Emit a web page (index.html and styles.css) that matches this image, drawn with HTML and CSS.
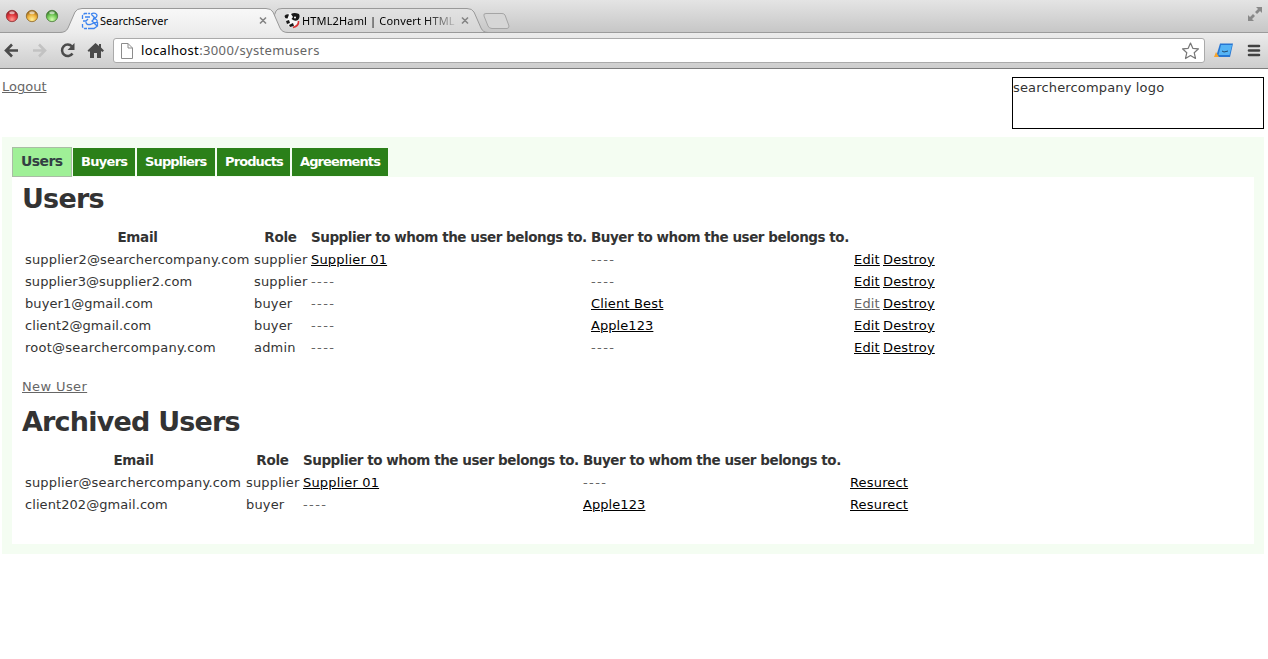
FILE: index.html
```html
<!DOCTYPE html>
<html lang="en">
<head>
<meta charset="utf-8">
<title>SearchServer</title>
<link rel="stylesheet" href="styles.css">
</head>
<body>
<header class="browser">
  <svg class="tabshapes" width="1268" height="34" viewBox="0 0 1268 34">
    <defs>
      <linearGradient id="act" x1="0" y1="0" x2="0" y2="1"><stop offset="0" stop-color="#f8f8f8"/><stop offset="1" stop-color="#ececec"/></linearGradient>
      <linearGradient id="ina" x1="0" y1="0" x2="0" y2="1"><stop offset="0" stop-color="#e2e2e2"/><stop offset="1" stop-color="#d6d6d6"/></linearGradient>
      <radialGradient id="red" cx=".5" cy=".8" r=".7"><stop offset="0" stop-color="#ff9b93"/><stop offset=".6" stop-color="#e2363c"/><stop offset="1" stop-color="#9c2228"/></radialGradient>
      <radialGradient id="yel" cx=".5" cy=".8" r=".7"><stop offset="0" stop-color="#fff09a"/><stop offset=".6" stop-color="#eeb03a"/><stop offset="1" stop-color="#9b6a1d"/></radialGradient>
      <radialGradient id="grn" cx=".5" cy=".8" r=".7"><stop offset="0" stop-color="#d5ffb0"/><stop offset=".6" stop-color="#71c955"/><stop offset="1" stop-color="#3c7c2c"/></radialGradient>
    </defs>
    <path d="M0 32.5H1268" stroke="#9b9b9b"/>
    <path d="M268 32.5Q276 32.5 278 26Q272 18 276 11Q277 8.500 282 8.500H467Q472 8.500 474 12L481 28Q483 32.500 488 32.500Z" fill="url(#ina)" stroke="#999"/>
    <path d="M60 34V32.500Q66 32.500 68 28L75 12Q77 8.500 82 8.500H266Q271 8.500 273 12L280 28Q282 32.500 288 32.500V34Z" fill="url(#act)"/>
    <path d="M60 32.500Q66 32.500 68 28L75 12Q77 8.500 82 8.500H266Q271 8.500 273 12L280 28Q282 32.500 288 32.500" fill="none" stroke="#999"/>
    <path d="M486 13.500H502Q504 13.500 505 15L509 26Q509 28.500 507 28.500H492Q489 28.500 488 26L484 16Q483 13.500 486 13.500Z" fill="#d6d6d6" stroke="#a5a5a5"/>
    <g stroke-width=".8"><circle cx="12" cy="16" r="5.700" fill="url(#red)" stroke="#8d3034"/><circle cx="32" cy="16" r="5.700" fill="url(#yel)" stroke="#8e6728"/><circle cx="52" cy="16" r="5.700" fill="url(#grn)" stroke="#4b7b3c"/></g>
    <g fill="#fff" opacity=".6"><ellipse cx="12" cy="12.800" rx="2.800" ry="1.500"/><ellipse cx="32" cy="12.800" rx="2.800" ry="1.500"/><ellipse cx="52" cy="12.800" rx="2.800" ry="1.500"/></g>
    <path d="M260 17.500L266 23.500M266 17.500L260 23.500M462 17.500L468 23.500M468 17.500L462 23.500" stroke="#858585" stroke-width="1.600"/>
    <g fill="#898989"><path d="M1256 7H1262V13L1260 11L1257 14L1255 12L1258 9Z"/><path d="M1248 15V21H1254L1252 19L1255 16L1253 14L1250 17Z"/></g>
    <g fill="none" stroke="#3d84ef" stroke-width="1.300"><path d="M82.500 19V15.500L84.500 13.500H90M82.500 24V27L84.500 28.500H87" stroke-dasharray="4 1"/><path d="M83 21H86L88 19M91 14Q95 12 97 15Q97 18 93 18.500Q98 19 97 22Q94 24 92 21M91 14L95 18L92 21L97 26M86 22Q86 25 90 24.500L94 23M88 28.500H94L97.500 26V22M85 17H90"/></g>
    <path d="M287 14Q294 11 299 15L298 22Q295 28 289 27L286 20Z" fill="#f7f7f7"/>
    <g fill="#171717"><path d="M284.500 16Q286 13.500 289 14.500L287.500 18.500Q285 19 284.500 16ZM291 14Q294 12 299 14Q300.500 17 298 20Q295 22 291.500 19L293 17ZM286 21L289 20L290 23L287 24ZM289 25L293 23L294 26L290 27Z"/><circle cx="295" cy="17.500" r="1" fill="#fff"/><path d="M298.500 21Q299 26 293 27.500" fill="none" stroke="#dc3434" stroke-width="1.600"/></g>
  </svg>
  <div class="tabs"><span class="tab one">SearchServer</span><span class="tab two">HTML2Haml | Convert HTML</span></div>
  <div class="toolbar">
    <svg width="108" height="30" viewBox="0 38 108 30">
      <path d="M18 50.500H7M12 44.500L6 50.500L12 56.500" fill="none" stroke="#4b4b4b" stroke-width="2.600"/>
      <path d="M33 50.500H44M39 44.500L45 50.500L39 56.500" fill="none" stroke="#c2c2c2" stroke-width="2.600"/>
      <path d="M72 46.500A5.700 5.700 0 1 0 72.500 53.500" fill="none" stroke="#4b4b4b" stroke-width="2.500"/><path d="M74.500 43V50H67.500Z" fill="#4b4b4b"/>
      <path d="M95.500 43L87.500 50.500L89 52L90 51V58H94V53H97V58H101V51L102.500 52L104 50.500L101 47.500V44H99V46Z" fill="#4b4b4b"/>
    </svg>
    <div class="address">
      <svg class="doc" width="14" height="16" viewBox="0 0 14 16"><path d="M1.500 .5H8L12.500 5V15.500H1.500ZM8 .5V5H12.500" fill="#fff" stroke="#8c8c8c"/></svg>
      <span class="url">localhost<span class="path">:3000/systemusers</span></span>
      <svg class="star" width="20" height="20" viewBox="0 0 20 20"><path d="M10.500 2L12.800 7.300L18.500 7.800L14.200 11.700L15.500 17.500L10.500 14.500L5.500 17.500L6.800 11.700L2.500 7.800L8.200 7.300Z" fill="#fff" stroke="#777" stroke-width="1.200" stroke-linejoin="round"/></svg>
    </div>
    <svg class="tools" width="60" height="30" viewBox="1208 38 60 30">
      <path d="M1220 43.500H1233L1230 57H1216Z" fill="#2776d2"/><path d="M1221 45H1232L1229.500 55H1218.500Z" fill="#55b4f5"/><path d="M1222 51L1224 52L1228 51" fill="none" stroke="#21496e"/><path d="M1214 57L1216 52L1219 57Z" fill="#f7a42c"/>
      <path d="M1249 46H1259M1249 50.500H1259M1249 55H1259" stroke="#414141" stroke-width="2.600" stroke-linecap="round"/>
    </svg>
  </div>
</header>
<main class="page">
  <div class="top"><a class="muted logout" href="#">Logout</a><div class="logo">searchercompany logo</div></div>
  <div class="shell">
    <nav class="menu"><a class="current" href="#">Users</a><a class="m2" href="#">Buyers</a><a class="m3" href="#">Suppliers</a><a class="m4" href="#">Products</a><a class="m5" href="#">Agreements</a></nav>
    <section class="panel">
      <h1>Users</h1>
      <table class="users">
        <colgroup><col class="email"><col class="role"><col class="supplier"><col class="buyer"><col class="edit"><col class="destroy"></colgroup>
        <tr><th>Email</th><th>Role</th><th class="long">Supplier to whom the user belongs to.</th><th class="long">Buyer to whom the user belongs to.</th><th></th><th></th></tr>
        <tr><td>supplier2@searchercompany.com</td><td>supplier</td><td><a href="#">Supplier 01</a></td><td><i>----</i></td><td><a href="#">Edit</a></td><td><a href="#">Destroy</a></td></tr>
        <tr><td class="tight">supplier3@supplier2.com</td><td>supplier</td><td><i>----</i></td><td><i>----</i></td><td><a href="#">Edit</a></td><td><a href="#">Destroy</a></td></tr>
        <tr><td class="tight">buyer1@gmail.com</td><td>buyer</td><td><i>----</i></td><td><a href="#">Client Best</a></td><td><a class="muted" href="#">Edit</a></td><td><a href="#">Destroy</a></td></tr>
        <tr><td class="tight">client2@gmail.com</td><td>buyer</td><td><i>----</i></td><td class="tight"><a href="#">Apple123</a></td><td><a href="#">Edit</a></td><td><a href="#">Destroy</a></td></tr>
        <tr><td class="loose">root@searchercompany.com</td><td>admin</td><td><i>----</i></td><td><i>----</i></td><td><a href="#">Edit</a></td><td><a href="#">Destroy</a></td></tr>
      </table>
      <p class="new"><a class="muted" href="#">New User</a></p>
      <h1>Archived Users</h1>
      <table class="archived">
        <colgroup><col class="email"><col class="role"><col class="supplier"><col class="buyer"><col class="resurect"></colgroup>
        <tr><th>Email</th><th>Role</th><th class="long">Supplier to whom the user belongs to.</th><th class="long">Buyer to whom the user belongs to.</th><th></th></tr>
        <tr><td>supplier@searchercompany.com</td><td>supplier</td><td><a href="#">Supplier 01</a></td><td><i>----</i></td><td><a href="#">Resurect</a></td></tr>
        <tr><td class="tight">client202@gmail.com</td><td>buyer</td><td><i>----</i></td><td class="tight"><a href="#">Apple123</a></td><td><a href="#">Resurect</a></td></tr>
      </table>
    </section>
  </div>
</main>
</body>
</html>
```
FILE: styles.css
```css
* { box-sizing: border-box; }
body { margin: 0; background: #fff; color: #333; font: 13px/18px "DejaVu Sans", Verdana, sans-serif; overflow: hidden; }
a { color: #000; text-underline-offset: 1px; text-decoration-thickness: 1px; }
.muted { color: #666; }
.browser { position: relative; height: 69px; font-family: "Noto Sans", sans-serif; color: #000; }
.tabshapes { position: absolute; left: 0; top: 0; background: linear-gradient(#e4e4e4, #c5c5c5); }
.tabs { position: absolute; left: 0; top: 12px; display: flex; font-size: 11px; }
.tab { white-space: nowrap; }
.tab.one { margin-left: 100px; width: 202px; }
.tab.two { width: 156px; letter-spacing: .15px; -webkit-mask-image: linear-gradient(90deg, #000 122px, transparent 158px); mask-image: linear-gradient(90deg, #000 122px, transparent 158px); }
.toolbar { position: absolute; left: 0; right: 0; top: 33px; height: 36px; display: flex; align-items: flex-start; padding-top: 5px; background: linear-gradient(#ececec, #cdcdcd); border-bottom: 1px solid #7d7d7d; }
.address { width: 1092px; margin-left: 5px; height: 25px; border: 1px solid #aaa; border-radius: 3px; background: #fff; display: flex; align-items: center; padding: 0 4px 0 7px; }
.doc { margin-left: -1px; margin-right: 1px; }
.url { margin: -2px 0 0 6px; font-size: 13px; flex: 1; letter-spacing: .36px; }
.path { color: #666; }
.tools { margin-left: 3px; }
.page { padding: 8px 4px 0 2px; }
.top { display: flex; justify-content: space-between; height: 60px; }
.logout { margin-top: 1px; }
.logo { width: 252px; height: 52px; border: 1px solid #000; padding-top: 1px; letter-spacing: .16px; }
.shell { background: #f4fdf2; padding: 10px; height: 417px; }
.menu { display: flex; height: 30px; align-items: flex-start; font-weight: bold; letter-spacing: -.9px; }
.menu a { height: 28px; margin: 1px 2px 0 0; padding: 5px 0 0 8px; text-decoration: none; color: #fff; background: #2b8019; }
.menu a.current { width: 60px; height: 30px; margin: 0 1px 0 0; color: #333f43; background: #9ff097; border: 1px solid #a9bda5; font-size: 14px; line-height: 17px; letter-spacing: -.6px; }
.menu .m2 { width: 62px; letter-spacing: -.7px; }
.menu .m3 { width: 78px; letter-spacing: -.85px; }
.menu .m4 { width: 73px; }
.menu .m5 { width: 96px; }
.panel { background: #fff; height: 367px; padding: 4px 10px 0; }
h1 { margin: 0; font-size: 27px; line-height: 36px; letter-spacing: -.8px; }
table { table-layout: fixed; border-collapse: separate; border-spacing: 2px; margin-top: 8px; }
th, td { padding: 1px; height: 20px; line-height: 18px; text-align: left; white-space: nowrap; letter-spacing: .17px; }
tr:first-child th { padding-bottom: 2px; height: 21px; }
th { text-align: center; font-weight: bold; font-size: 13.5px; letter-spacing: -.3px; }
th.long { text-align: left; letter-spacing: -.46px; }
td.tight { letter-spacing: .07px; }
td.loose { letter-spacing: .23px; }
i { font-style: normal; color: #666; letter-spacing: 1.4px; }
.users { width: 918px; }
.users .email { width: 227px; }
.users .role { width: 55px; }
.users .supplier { width: 278px; }
.users .buyer { width: 261px; }
.users .edit { width: 27px; }
.users .destroy { width: 56px; }
.archived { width: 890px; }
.archived .email { width: 219px; }
.archived .role { width: 55px; }
.archived .supplier { width: 278px; }
.archived .buyer { width: 265px; }
.archived .resurect { width: 61px; }
.new { margin: 18px 0 8px; letter-spacing: .38px; }
```
